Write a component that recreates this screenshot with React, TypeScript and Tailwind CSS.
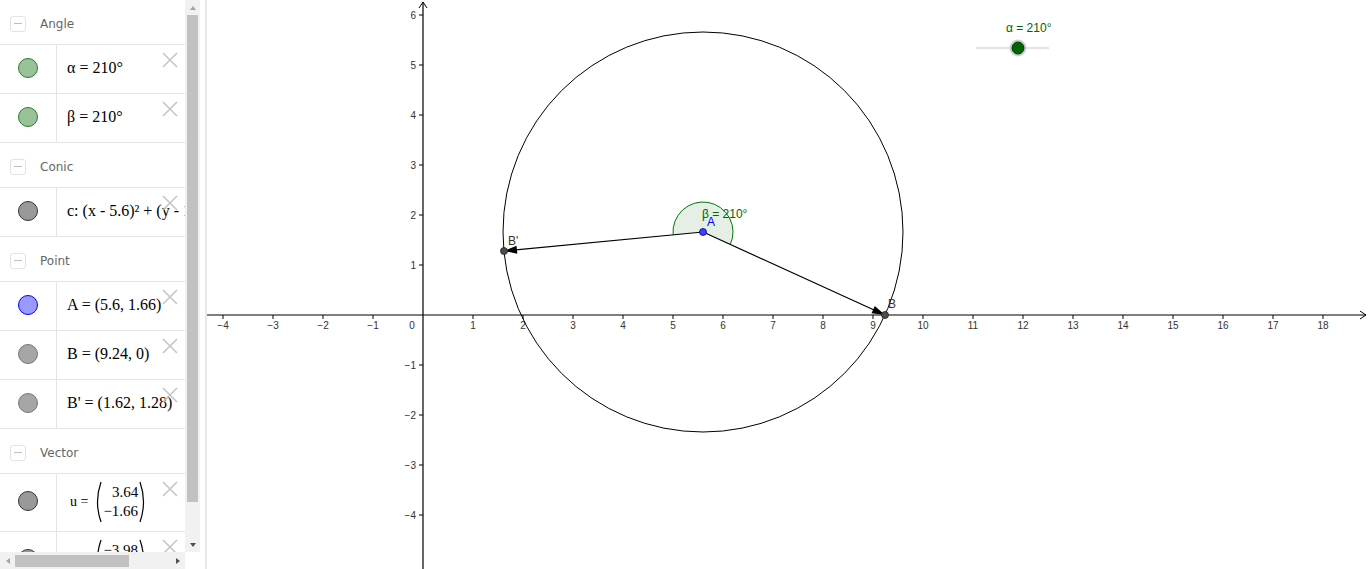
import React from "react";

// graphics view: origin at (423, 315), 50px per unit
const OX = 423;
const OY = 315;
const U = 50;
const px = (x: number) => OX + x * U;
const py = (y: number) => OY - y * U;

const A = { x: px(5.6), y: py(1.66) };
const B = { x: px(9.24), y: py(0) };
const Bp = { x: px(1.62), y: py(1.28) };

function arrowHead(from: { x: number; y: number }, to: { x: number; y: number }) {
  const dx = to.x - from.x;
  const dy = to.y - from.y;
  const len = Math.hypot(dx, dy);
  const ux = dx / len;
  const uy = dy / len;
  const bx = to.x - ux * 13;
  const by = to.y - uy * 13;
  const w = 4;
  return `${to.x},${to.y} ${bx - uy * w},${by + ux * w} ${bx + uy * w},${by - ux * w}`;
}

function sectorPath() {
  const r = 30;
  const a1 = Math.atan2(1.66, 3.64) * -1; // direction of AB in math coords
  const a2 = a1 + (210 * Math.PI) / 180;
  const sx = A.x + r * Math.cos(a1);
  const sy = A.y - r * Math.sin(a1);
  const ex = A.x + r * Math.cos(a2);
  const ey = A.y - r * Math.sin(a2);
  return { fill: `M${A.x},${A.y} L${sx},${sy} A${r},${r} 0 1 0 ${ex},${ey} Z`, arc: `M${sx},${sy} A${r},${r} 0 1 0 ${ex},${ey}` };
}

const xTicks = Array.from({ length: 23 }, (_, i) => i - 4).filter((n) => n !== 0);
const yTicks = [6, 5, 4, 3, 2, 1, -1, -2, -3, -4];

function Graphics() {
  const s = sectorPath();
  const font = { fontFamily: '"Liberation Sans", Arial, sans-serif' };
  return (
    <svg className="flex-1 h-[569px] block" viewBox="207 0 1161 569" style={font}>
      {/* axes */}
      <line x1={207} y1={OY} x2={1366} y2={OY} stroke="#000" strokeWidth={1.2} />
      <polyline points="1360,311 1366,315 1360,319" fill="none" stroke="#000" strokeWidth={1} />
      <line x1={OX} y1={569} x2={OX} y2={2} stroke="#000" strokeWidth={1.2} />
      <polyline points="419,8 423,2 427,8" fill="none" stroke="#000" strokeWidth={1} />
      {xTicks.map((n) => (
        <g key={n}>
          <line x1={px(n)} y1={OY} x2={px(n)} y2={OY + 4} stroke="#000" strokeWidth={1} />
          <text x={px(n)} y={OY + 14} fontSize={10} fill="#333" textAnchor="middle">
            {n < 0 ? `\u2212${-n}` : n}
          </text>
        </g>
      ))}
      <text x={412} y={OY + 14} fontSize={10} fill="#333" textAnchor="middle">0</text>
      {yTicks.map((n) => (
        <g key={n}>
          <line x1={OX - 4} y1={py(n)} x2={OX} y2={py(n)} stroke="#000" strokeWidth={1} />
          <text x={416} y={py(n) + 4} fontSize={10} fill="#333" textAnchor="end">
            {n < 0 ? `\u2212${-n}` : n}
          </text>
        </g>
      ))}

      {/* circle c */}
      <circle cx={A.x} cy={A.y} r={200} fill="none" stroke="#000" strokeWidth={1} />

      {/* angle beta */}
      <path d={s.fill} fill="rgba(0,100,0,0.1)" />
      <path d={s.arc} fill="none" stroke="#007800" strokeWidth={1} />

      {/* vectors */}
      <line x1={A.x} y1={A.y} x2={B.x} y2={B.y} stroke="#000" strokeWidth={1.2} />
      <polygon points={arrowHead(A, B)} fill="#000" />
      <line x1={A.x} y1={A.y} x2={Bp.x} y2={Bp.y} stroke="#000" strokeWidth={1.2} />
      <polygon points={arrowHead(A, Bp)} fill="#000" />

      {/* points */}
      <circle cx={Bp.x} cy={Bp.y} r={3.5} fill="#4d4d4d" stroke="#222" strokeWidth={0.8} />
      <circle cx={B.x} cy={B.y} r={3.5} fill="#4d4d4d" stroke="#222" strokeWidth={0.8} />
      <circle cx={A.x} cy={A.y} r={3.5} fill="#4040ff" stroke="#00007f" strokeWidth={0.8} />

      <text x={702} y={218} fontSize={12} fill="#006400">β = 210°</text>
      <text x={707} y={226} fontSize={12} fill="#0000ff">A</text>
      <text x={508} y={245} fontSize={12} fill="#333">B'</text>
      <text x={888} y={308} fontSize={12} fill="#333">B</text>

      {/* slider alpha */}
      <line x1={976} y1={48} x2={1049} y2={48} stroke="#c8c8c8" strokeWidth={1} />
      <circle cx={1018} cy={48} r={8.5} fill="#d0d0d0" />
      <circle cx={1018} cy={48} r={6} fill="#006400" stroke="#003a00" strokeWidth={1} />
      <text x={1006} y={32} fontSize={12} fill="#006400">α = 210°</text>
    </svg>
  );
}

function CloseX() {
  return (
    <svg className="absolute right-[7px] top-[7px]" width="16" height="16" viewBox="0 0 16 16">
      <path d="M1 1 L15 15 M15 1 L1 15" stroke="#c6c6c6" strokeWidth={1.6} />
    </svg>
  );
}

function Tri({ dir, color }: { dir: "l" | "r" | "u" | "d"; color: string }) {
  const pts = { l: "6,1 2,4 6,7", r: "2,1 6,4 2,7", u: "1,6 4,2 7,6", d: "1,2 4,6 7,2" }[dir];
  return (
    <svg width="8" height="8" viewBox="0 0 8 8">
      <polygon points={pts} fill={color} />
    </svg>
  );
}

function Header({ title }: { title: string }) {
  return (
    <div className="h-[45px] pt-[3px] flex items-center border-b border-[#e4e4e4] shrink-0">
      <div className="ml-[10px] w-[16px] h-[16px] rounded-[3px] border border-[#e2e2e2] flex items-center justify-center">
        <div className="w-[8px] h-[1.5px] bg-[#bdbdbd]" />
      </div>
      <span className="ml-[14px] text-[12px] text-[#666]" style={{ fontFamily: '"DejaVu Sans", sans-serif' }}>
        {title}
      </span>
    </div>
  );
}

function Row({ fill, stroke, h = 49, children }: { fill: string; stroke: string; h?: number; children: React.ReactNode }) {
  return (
    <div className="relative flex border-b border-[#e4e4e4] shrink-0" style={{ height: h }}>
      <div className="w-[57px] shrink-0 border-r border-[#e4e4e4] flex items-center justify-center pb-[3px]">
        <div className="w-[20px] h-[20px] rounded-full border" style={{ background: fill, borderColor: stroke }} />
      </div>
      <div
        className="flex-1 flex items-center pl-[10px] pb-[2px] text-[16px] text-black whitespace-nowrap overflow-hidden"
        style={{ fontFamily: '"Liberation Serif", "DejaVu Serif", serif' }}
      >
        {children}
      </div>
      <CloseX />
    </div>
  );
}

function ColVec({ a, b }: { a: string; b: string }) {
  return (
    <div className="flex items-center">
      <svg width="8" height="42" viewBox="0 0 8 42">
        <path d="M7 1 Q0 21 7 41" fill="none" stroke="#000" strokeWidth={1.2} />
      </svg>
      <div className="flex flex-col items-end text-[15px] leading-[19px] px-[1px]">
        <span>{a}</span>
        <span>{b}</span>
      </div>
      <svg width="8" height="42" viewBox="0 0 8 42">
        <path d="M1 1 Q8 21 1 41" fill="none" stroke="#000" strokeWidth={1.2} />
      </svg>
    </div>
  );
}

function AlgebraView() {
  return (
    <div className="w-[207px] shrink-0 h-[569px] flex border-r-2 border-[#e8e8e8] bg-white">
      <div className="w-[185px] flex flex-col">
        <div className="h-[552px] flex flex-col overflow-hidden">
          <Header title="Angle" />
          <Row fill="#99c299" stroke="#2d7a2d">α = 210°</Row>
          <Row fill="#99c299" stroke="#2d7a2d">β = 210°</Row>
          <Header title="Conic" />
          <Row fill="#999999" stroke="#333">c: (x - 5.6)² + (y - 1.66)² = 16</Row>
          <Header title="Point" />
          <Row fill="#9999ff" stroke="#0000ff">A = (5.6, 1.66)</Row>
          <Row fill="#a6a6a6" stroke="#777">B = (9.24, 0)</Row>
          <Row fill="#a6a6a6" stroke="#777">B' = (1.62, 1.28)</Row>
          <Header title="Vector" />
          <Row fill="#999999" stroke="#333" h={58}>
            <span className="text-[14px] mr-[6px] ml-[3px]">u =</span>
            <ColVec a="3.64" b="−1.66" />
          </Row>
          <Row fill="#999999" stroke="#333" h={58}>
            <span className="text-[14px] mr-[6px] ml-[3px]">v =</span>
            <ColVec a="−3.98" b="−0.38" />
          </Row>
        </div>
        {/* horizontal scrollbar */}
        <div className="h-[17px] bg-[#f1f1f1] flex items-center">
          <div className="w-[15px] flex justify-center">
            <Tri dir="l" color="#a3a3a3" />
          </div>
          <div className="w-[114px] h-[12px] bg-[#c1c1c1]" />
          <div className="flex-1" />
          <div className="w-[15px] flex justify-center">
            <Tri dir="r" color="#505050" />
          </div>
        </div>
      </div>
      {/* vertical scrollbar */}
      <div className="w-[15px] h-[552px] bg-[#f1f1f1] flex flex-col items-center">
        <div className="h-[15px] flex items-center">
          <Tri dir="u" color="#a3a3a3" />
        </div>
        <div className="w-[11px] h-[487px] bg-[#c1c1c1]" />
        <div className="flex-1" />
        <div className="h-[15px] flex items-center">
          <Tri dir="d" color="#505050" />
        </div>
      </div>
      <div className="flex-1" />
    </div>
  );
}

export default function App() {
  return (
    <div className="w-[1368px] h-[569px] flex bg-white overflow-hidden">
      <AlgebraView />
      <Graphics />
    </div>
  );
}
